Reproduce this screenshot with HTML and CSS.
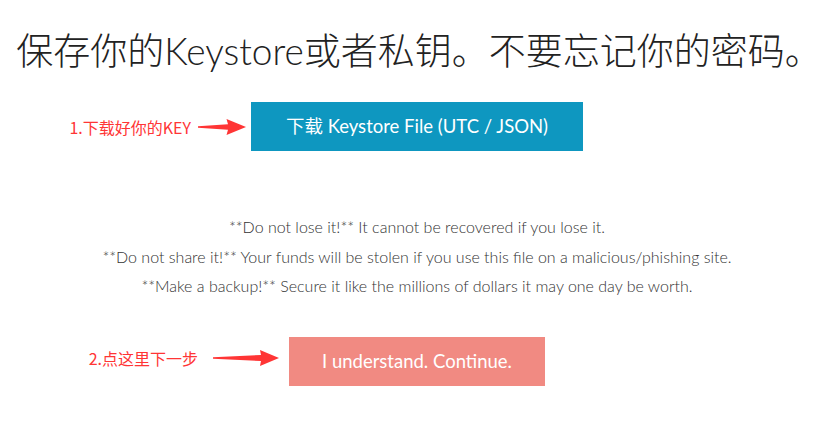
FILE: index.html
```html
<!DOCTYPE html>
<html lang="zh-CN">
<head>
<meta charset="utf-8">
<title>Save your Keystore</title>
<link rel="stylesheet" href="styles.css">
</head>
<body>
<main class="page">
  <h1 class="title">保存你的Keystore或者私钥。不要忘记你的密码。</h1>

  <div class="cta cta-download">
    <div class="note note-1">
      <span class="note-text">1.下载好你的KEY</span>
      <svg class="arrow" width="48" height="16" viewBox="0 0 48 16" aria-hidden="true">
        <polygon points="0,7.2 30,5.2 28.5,0 48,8 28.5,16 30,10.8 0,8.8" fill="#ff3535"/>
      </svg>
    </div>
    <a class="btn btn-primary" href="#">下载 Keystore File (UTC / JSON)</a>
  </div>

  <div class="warnings">
    <p>**Do not lose it!** It cannot be recovered if you lose it.</p>
    <p>**Do not share it!** Your funds will be stolen if you use this file on a malicious/phishing site.</p>
    <p>**Make a backup!** Secure it like the millions of dollars it may one day be worth.</p>
  </div>

  <div class="cta cta-continue">
    <div class="note note-2">
      <span class="note-text">2.点这里下一步</span>
      <svg class="arrow" width="66" height="16" viewBox="0 0 66 16" aria-hidden="true">
        <polygon points="0,7.2 48,5 47,0 66,8 47,16 48,11 0,8.8" fill="#ff3535"/>
      </svg>
    </div>
    <a class="btn btn-danger" href="#">I understand. Continue.</a>
  </div>
</main>
</body>
</html>
```
FILE: styles.css
```css
html, body {
  margin: 0;
  padding: 0;
  background: #ffffff;
}

body {
  font-family: Lato, "Noto Sans CJK SC", sans-serif;
  color: #333333;
}

.page {
  display: flex;
  flex-direction: column;
  align-items: center;
  padding-top: 29px;
}

.title {
  margin: 0;
  padding-left: 14px;
  font-family: Lato, "Noto Sans CJK SC", sans-serif;
  font-weight: 300;
  font-size: 37px;
  line-height: 43px;
  color: #222222;
  white-space: nowrap;
}

.cta {
  position: relative;
  margin-left: 10px;
}

.cta-download {
  margin-top: 30px;
}

.cta-continue {
  margin-top: 36px;
}

.btn {
  display: block;
  height: 49px;
  line-height: 49px;
  font-family: Lato, "Noto Sans CJK SC", sans-serif;
  font-weight: 400;
  color: #ffffff;
  text-decoration: none;
  text-align: center;
  box-sizing: border-box;
}

.btn-primary {
  width: 332px;
  font-size: 18.5px;
  background: #0e97c0;
}

.btn-danger {
  width: 256px;
  font-size: 18.5px;
  background: #f18a82;
}

.note {
  position: absolute;
  top: 50%;
  transform: translateY(-50%);
  display: flex;
  align-items: center;
  white-space: nowrap;
}

.note-text {
  font-family: "Noto Sans CJK SC", sans-serif;
  font-size: 16px;
  line-height: 20px;
  color: #ff3535;
}

.arrow {
  display: block;
}

.note-1 {
  right: calc(100% + 5px);
  gap: 7px;
}

.note-2 {
  right: calc(100% + 10px);
  gap: 15px;
  top: calc(50% - 3px);
}

.warnings {
  margin-top: 61px;
  margin-left: 10px;
  text-align: center;
}

.warnings p {
  margin: 0;
  font-family: Lato, sans-serif;
  font-weight: 300;
  font-size: 16px;
  line-height: 29.5px;
  color: #333333;
}
```
